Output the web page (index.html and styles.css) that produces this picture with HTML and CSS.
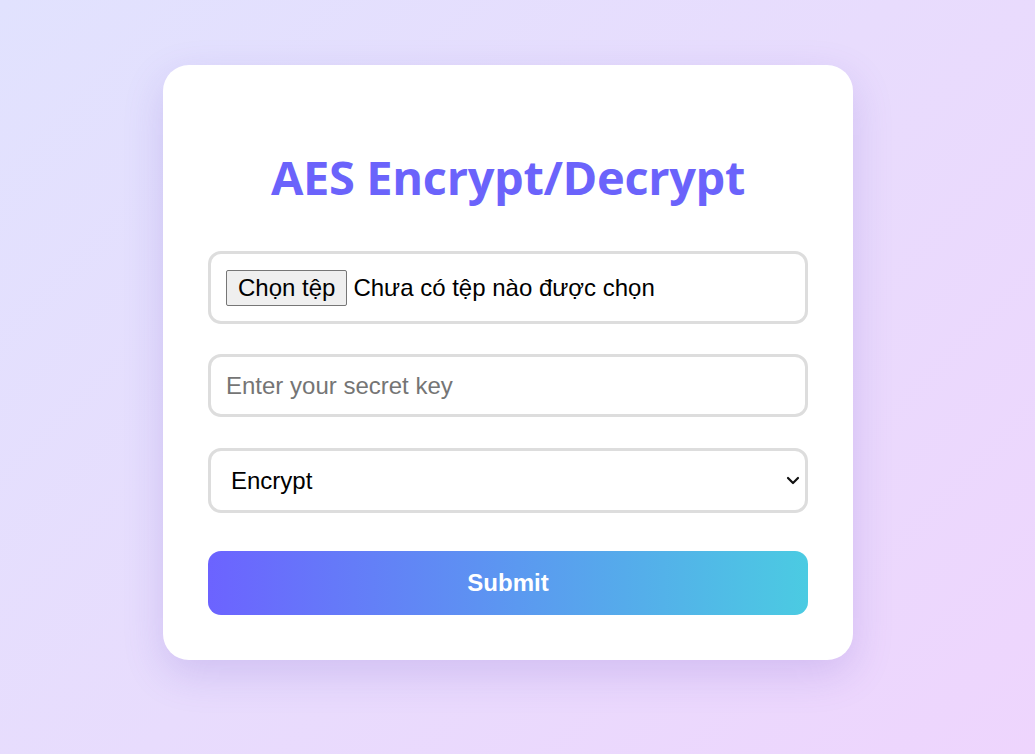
FILE: index.html
```html
<!DOCTYPE html>
<html lang="vi">
<head>
<meta charset="utf-8">
<title>AES Encrypt/Decrypt</title>
<link rel="stylesheet" href="styles.css">
</head>
<body>
<main class="page">
  <form class="card">
    <h1 class="title">AES Encrypt/Decrypt</h1>
    <label class="field file-field">
      <span class="file-btn">Chọn tệp</span>
      <span class="file-name">Chưa có tệp nào được chọn</span>
      <input class="file-input" type="file">
    </label>
    <input class="field text-field" type="text" placeholder="Enter your secret key">
    <div class="select-wrap">
      <select class="field select-field">
        <option>Encrypt</option>
        <option>Decrypt</option>
      </select>
      <svg class="chevron" width="14" height="9" viewBox="0 0 14 9" aria-hidden="true">
        <path d="M2 2 L7 7 L12 2" fill="none" stroke="#111" stroke-width="2.2" stroke-linecap="round" stroke-linejoin="round"/>
      </svg>
    </div>
    <button class="submit" type="button">Submit</button>
  </form>
</main>
</body>
</html>
```

FILE: styles.css
```css
* { box-sizing: border-box; }

html, body {
  margin: 0;
  height: 100%;
}

body {
  background: linear-gradient(135deg, #e1e2fe 0%, #e8dcfd 50%, #eed5fd 100%);
  font-family: "Liberation Sans", Arial, sans-serif;
}

.page {
  min-height: 100%;
  display: flex;
  justify-content: center;
  align-items: flex-start;
  padding: 65px 19px 0 0;
}

.card {
  width: 690px;
  background: #fff;
  border-radius: 26px;
  padding: 45px;
  display: flex;
  flex-direction: column;
  box-shadow: 0 14px 40px rgba(110, 80, 200, 0.2);
}

.title {
  margin: 35px 0 42px;
  text-align: center;
  font-family: "Open Sans", "Noto Sans", sans-serif;
  font-weight: 700;
  font-size: 47px;
  line-height: 64px;
  letter-spacing: -0.35px;
  color: #6b63fb;
}

.field {
  width: 100%;
  border: 3px solid #dddddd;
  border-radius: 13px;
  background: #fff;
  font-family: "Liberation Sans", Arial, sans-serif;
  font-size: 24px;
  color: #000;
}

.file-field {
  display: flex;
  align-items: center;
  height: 73px;
  padding: 0 15px;
  gap: 6px;
  cursor: pointer;
}

.file-btn {
  display: flex;
  align-items: center;
  height: 36px;
  padding: 0 11px;
  background: #efefef;
  border: 1px solid #767676;
  border-radius: 2px;
  color: #000;
}

.file-input {
  display: none;
}

.text-field {
  margin-top: 30px;
  height: 63px;
  padding: 0 15px;
  outline: none;
}

.text-field::placeholder {
  color: #757575;
}

.select-wrap {
  position: relative;
  margin-top: 31px;
}

.select-field {
  display: block;
  height: 65px;
  padding: 0 20px;
  appearance: none;
  -webkit-appearance: none;
  outline: none;
}

.chevron {
  position: absolute;
  right: 8px;
  top: 28px;
  pointer-events: none;
}

.submit {
  margin-top: 38px;
  height: 64px;
  border: none;
  border-radius: 13px;
  background: linear-gradient(90deg, #6c63ff 0%, #4bcbe2 100%);
  color: #fff;
  font-family: "Liberation Sans", Arial, sans-serif;
  font-weight: 700;
  font-size: 24px;
  cursor: pointer;
}
```
